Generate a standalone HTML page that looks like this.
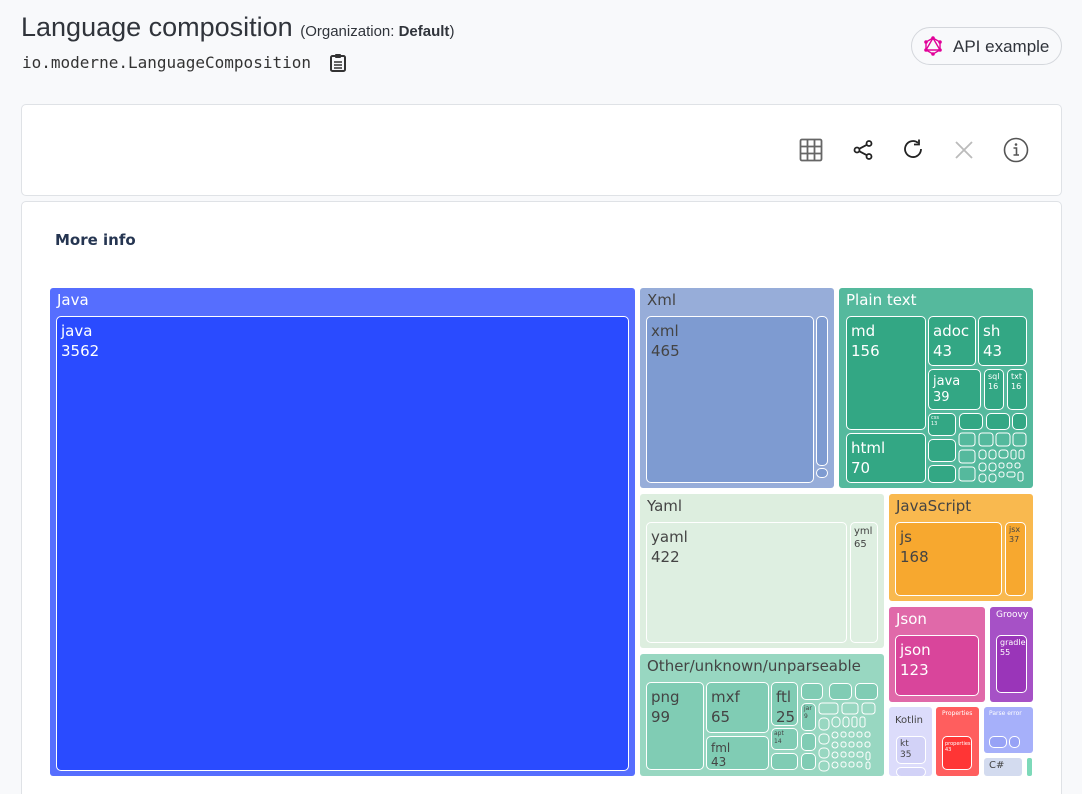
<!DOCTYPE html>
<html style="width:1082px;height:794px;overflow:hidden"><head><meta charset="utf-8"><style>
*{box-sizing:border-box;margin:0;padding:0}
body{width:1082px;height:794px;background:#f8f9fb;font-family:"Liberation Sans",sans-serif;position:relative;overflow:hidden;color:#2b2f36}
.a{position:absolute}
.p{position:absolute;border-radius:3px;font-family:"DejaVu Sans",sans-serif;font-size:15px;padding:3px 7px;line-height:18px;color:#fff}
.i{position:absolute;border:1.5px solid #fff;border-radius:5px;font-family:"DejaVu Sans",sans-serif;font-size:15px;padding:4px 4px;line-height:20px;color:#fff;overflow:hidden}
.d{color:#444}
.s{font-size:8px;line-height:10px;padding:2px 3px}
.t{font-size:5px;line-height:6px;padding:1px 2px}
</style></head><body>
<div class="a" style="left:21px;top:12px;font-size:27px;color:#30343b">Language composition <span style="font-size:15px">(Organization: <b>Default</b>)</span></div>
<div class="a" style="left:22px;top:53px;font-family:'DejaVu Sans Mono','Liberation Mono',monospace;font-size:16px;color:#333">io.moderne.LanguageComposition</div>
<svg class="a" style="left:328px;top:52px" width="20" height="21" viewBox="0 0 20 21"><rect x="3" y="4" width="14" height="15" rx="1.5" fill="none" stroke="#333" stroke-width="2"/><rect x="7" y="2" width="6" height="4" rx="1" fill="#333"/><path d="M6 10h8M6 13h8M6 16h8" stroke="#333" stroke-width="1.6"/></svg>
<div class="a" style="left:911px;top:27px;width:151px;height:38px;border:1px solid #d4d7dc;border-radius:19px;background:#f8f9fb"></div>
<svg class="a" style="left:922px;top:35px" width="22" height="22" viewBox="0 0 22 22"><g fill="none" stroke="#e10098" stroke-width="1.4"><path d="M11 3L4 7v8l7 4 7-4V7z"/><path d="M11 3L4 15h14z"/></g><g fill="#e10098"><circle cx="11" cy="3" r="1.8"/><circle cx="4" cy="7" r="1.8"/><circle cx="18" cy="7" r="1.8"/><circle cx="4" cy="15" r="1.8"/><circle cx="18" cy="15" r="1.8"/><circle cx="11" cy="19" r="1.8"/></g></svg>
<div class="a" style="left:953px;top:37px;font-size:17px;color:#30343b">API example</div>
<div class="a" style="left:21px;top:104px;width:1041px;height:92px;background:#fff;border:1px solid #dfe2e6;border-radius:5px"></div>
<svg class="a" style="left:799px;top:138px" width="24" height="24" viewBox="0 0 24 24"><rect x="1.5" y="1.5" width="21" height="21" rx="1.5" fill="none" stroke="#666" stroke-width="1.8"/><path d="M8.5 2v20M15.5 2v20M2 8.5h20M2 15.5h20" stroke="#666" stroke-width="1.8"/></svg>
<svg class="a" style="left:852px;top:138px" width="24" height="24" viewBox="0 0 24 24"><g fill="none" stroke="#222" stroke-width="1.8"><circle cx="17" cy="5.5" r="2.5"/><circle cx="5" cy="12" r="2.5"/><circle cx="17" cy="18.5" r="2.5"/><path d="M7.2 10.8l7.6-4M7.2 13.2l7.6 4"/></g></svg>
<svg class="a" style="left:902px;top:138px" width="24" height="24" viewBox="0 0 24 24"><path d="M19 11a8 8 0 1 1-3-6.2" fill="none" stroke="#222" stroke-width="1.8"/><path d="M17 1.5v5h-5" fill="none" stroke="#222" stroke-width="1.8"/></svg>
<svg class="a" style="left:953px;top:139px" width="22" height="22" viewBox="0 0 22 22"><path d="M3 3l16 16M19 3L3 19" stroke="#bbb" stroke-width="1.8"/></svg>
<svg class="a" style="left:1003px;top:137px" width="26" height="26" viewBox="0 0 26 26"><circle cx="13" cy="13" r="11.5" fill="none" stroke="#555" stroke-width="1.6"/><circle cx="13" cy="7.5" r="1.3" fill="#555"/><path d="M10.5 11h3v7M10.5 18h5.5" fill="none" stroke="#555" stroke-width="1.6"/></svg>
<div class="a" style="left:21px;top:201px;width:1041px;height:620px;background:#fff;border:1px solid #dfe2e6;border-radius:5px"></div>
<div class="a" style="left:55px;top:231px;font-family:'DejaVu Sans',sans-serif;font-size:15px;font-weight:bold;color:#253551">More info</div>

<div class="p" style="left:50px;top:288px;width:585px;height:488px;background:#566efe">Java</div>
<div class="i" style="left:56px;top:316px;width:573px;height:455px;background:#2a4bff">java<br>3562</div>

<div class="p d" style="left:640px;top:288px;width:194px;height:200px;background:#97add9">Xml</div>
<div class="i d" style="left:646px;top:316px;width:168px;height:167px;background:#7e9bd1">xml<br>465</div>
<div class="i" style="left:816px;top:316px;width:12px;height:150px;background:#7e9bd1;border-width:1px"></div>
<div class="i" style="left:816px;top:468px;width:12px;height:5px;background:#7e9bd1;border-width:1px"></div>

<div class="p" style="left:839px;top:288px;width:194px;height:200px;background:#55b99d">Plain text</div>
<div class="i" style="left:846px;top:316px;width:80px;height:114px;background:#33a784">md<br>156</div>
<div class="i" style="left:846px;top:433px;width:80px;height:50px;background:#33a784">html<br>70</div>
<div class="i" style="left:928px;top:316px;width:48px;height:50px;background:#33a784">adoc<br>43</div>
<div class="i" style="left:978px;top:316px;width:49px;height:50px;background:#33a784">sh<br>43</div>
<div class="i" style="left:928px;top:369px;width:53px;height:41px;background:#33a784;font-size:13px;line-height:16px">java<br>39</div>
<div class="i s" style="left:984px;top:369px;width:20px;height:41px;background:#33a784">sql<br>16</div>
<div class="i s" style="left:1007px;top:369px;width:20px;height:41px;background:#33a784">txt<br>16</div>
<div class="i t" style="left:928px;top:413px;width:28px;height:23px;background:#33a784">css<br>13</div>
<div class="i t" style="left:928px;top:439px;width:28px;height:23px;background:#33a784"></div>
<div class="i t" style="left:928px;top:465px;width:28px;height:18px;background:#33a784"></div>
<div class="i t" style="left:959px;top:413px;width:24px;height:17px;background:#33a784"></div>
<div class="i t" style="left:986px;top:413px;width:24px;height:17px;background:#33a784"></div>
<div class="i t" style="left:1012px;top:413px;width:15px;height:17px;background:#33a784"></div>
<svg class="a" style="left:958px;top:432px" width="70" height="52"><g fill="none" stroke="#fff" stroke-width="1"><rect x="1" y="1" width="16" height="13" rx="3"/><rect x="21" y="1" width="14" height="13" rx="3"/><rect x="38" y="1" width="14" height="13" rx="3"/><rect x="55" y="1" width="13" height="13" rx="3"/><rect x="1" y="18" width="16" height="13" rx="3"/><rect x="1" y="35" width="16" height="14" rx="3"/><rect x="21" y="18" width="7" height="9" rx="3"/><rect x="31" y="18" width="7" height="9" rx="3"/><rect x="41" y="18" width="9" height="8" rx="3"/><rect x="53" y="18" width="5" height="9" rx="2"/><rect x="61" y="18" width="5" height="9" rx="2"/><rect x="21" y="31" width="7" height="8" rx="3"/><rect x="31" y="31" width="7" height="8" rx="3"/><rect x="41" y="31" width="5" height="5" rx="2"/><rect x="49" y="31" width="5" height="5" rx="2"/><rect x="57" y="31" width="5" height="5" rx="2"/><rect x="21" y="42" width="7" height="8" rx="3"/><rect x="31" y="42" width="7" height="8" rx="3"/><rect x="41" y="40" width="5" height="5" rx="2"/><rect x="49" y="40" width="8" height="5" rx="2"/><rect x="60" y="40" width="5" height="9" rx="2"/></g></svg>

<div class="p d" style="left:640px;top:494px;width:244px;height:154px;background:#ddeedf">Yaml</div>
<div class="i d" style="left:646px;top:522px;width:201px;height:121px;background:#deefe1">yaml<br>422</div>
<div class="i d s" style="left:850px;top:522px;width:28px;height:121px;background:#deefe1;font-size:10px;line-height:13px">yml<br>65</div>

<div class="p d" style="left:889px;top:494px;width:144px;height:107px;background:#f9b94f">JavaScript</div>
<div class="i d" style="left:895px;top:522px;width:107px;height:74px;background:#f7a82f">js<br>168</div>
<div class="i d s" style="left:1005px;top:522px;width:21px;height:74px;background:#f7a82f">jsx<br>37</div>

<div class="p" style="left:889px;top:607px;width:96px;height:95px;background:#e069a9">Json</div>
<div class="i" style="left:895px;top:635px;width:84px;height:61px;background:#d9459b">json<br>123</div>
<div class="p" style="left:990px;top:607px;width:43px;height:95px;background:#a651c6;font-size:9px;line-height:12px;padding:2px 6px">Groovy</div>
<div class="i s" style="left:996px;top:635px;width:31px;height:58px;background:#9a35b9">gradle<br>55</div>

<div class="p d" style="left:640px;top:654px;width:244px;height:122px;background:#98d7c1">Other/unknown/unparseable</div>
<div class="i d" style="left:646px;top:682px;width:58px;height:88px;background:#80ccb4">png<br>99</div>
<div class="i d" style="left:706px;top:682px;width:63px;height:51px;background:#80ccb4">mxf<br>65</div>
<div class="i d" style="left:706px;top:736px;width:63px;height:34px;background:#80ccb4;font-size:12px;line-height:14px">fml<br>43</div>
<div class="i d" style="left:771px;top:682px;width:27px;height:44px;background:#80ccb4">ftl<br>25</div>
<div class="i d t" style="left:771px;top:728px;width:27px;height:22px;background:#80ccb4;font-size:6px;line-height:8px">apt<br>14</div>
<div class="i d t" style="left:771px;top:753px;width:27px;height:17px;background:#80ccb4"></div>
<div class="i d t" style="left:801px;top:683px;width:22px;height:17px;background:#80ccb4"></div>
<div class="i d t" style="left:829px;top:683px;width:23px;height:17px;background:#80ccb4"></div>
<div class="i d t" style="left:855px;top:683px;width:23px;height:17px;background:#80ccb4"></div>
<div class="i d t" style="left:801px;top:703px;width:15px;height:28px;background:#80ccb4;font-size:6px;line-height:8px">jar<br>9</div>
<div class="i d t" style="left:801px;top:733px;width:15px;height:18px;background:#80ccb4"></div>
<div class="i d t" style="left:801px;top:753px;width:15px;height:17px;background:#80ccb4"></div>
<svg class="a" style="left:818px;top:702px" width="64" height="70"><g fill="none" stroke="#fff" stroke-width="1"><rect x="1" y="1" width="19" height="11" rx="3"/><rect x="24" y="1" width="16" height="11" rx="3"/><rect x="44" y="1" width="13" height="11" rx="3"/><rect x="1" y="16" width="10" height="12" rx="4"/><rect x="14" y="15" width="8" height="10" rx="4"/><rect x="25" y="15" width="6" height="10" rx="3"/><rect x="34" y="15" width="5" height="10" rx="2"/><rect x="42" y="15" width="5" height="10" rx="2"/><rect x="1" y="32" width="10" height="10" rx="4"/><rect x="1" y="46" width="10" height="10" rx="4"/><rect x="1" y="59" width="10" height="10" rx="4"/><rect x="14" y="30" width="6" height="6" rx="3"/><rect x="23" y="30" width="5" height="5" rx="2"/><rect x="31" y="30" width="5" height="5" rx="2"/><rect x="39" y="30" width="5" height="5" rx="2"/><rect x="47" y="30" width="5" height="5" rx="2"/><rect x="14" y="40" width="6" height="6" rx="3"/><rect x="23" y="40" width="5" height="5" rx="2"/><rect x="31" y="40" width="5" height="5" rx="2"/><rect x="39" y="40" width="5" height="5" rx="2"/><rect x="47" y="40" width="5" height="5" rx="2"/><rect x="14" y="50" width="6" height="6" rx="3"/><rect x="23" y="50" width="5" height="5" rx="2"/><rect x="31" y="50" width="5" height="5" rx="2"/><rect x="39" y="50" width="6" height="5" rx="2"/><rect x="48" y="50" width="4" height="8" rx="2"/><rect x="14" y="60" width="6" height="6" rx="3"/><rect x="23" y="60" width="5" height="5" rx="2"/><rect x="31" y="60" width="5" height="5" rx="2"/><rect x="39" y="60" width="5" height="5" rx="2"/><rect x="48" y="60" width="4" height="7" rx="2"/></g></svg>

<div class="p d" style="left:889px;top:707px;width:43px;height:69px;background:#dcdcfb;font-size:10px;padding:3px 6px;line-height:22px">Kotlin</div>
<div class="i d s" style="left:896px;top:736px;width:30px;height:28px;background:#d2d2f7;font-size:9px;line-height:11px">kt<br>35</div>
<div class="i" style="left:896px;top:767px;width:30px;height:4px;background:#d2d2f7;border-width:1px"></div>
<div class="p" style="left:936px;top:707px;width:43px;height:69px;background:#ff5e5e;font-size:6px;line-height:12px;padding:1px 6px">Properties</div>
<div class="i t" style="left:942px;top:736px;width:30px;height:34px;background:#ff3535;padding:4px 2px">properties<br>43</div>
<div class="p" style="left:984px;top:707px;width:49px;height:46px;background:#a6b0fa;font-size:6px;line-height:12px;padding:1px 5px">Parse error</div>
<div class="i" style="left:989px;top:736px;width:18px;height:12px;background:#97a2f6;border-width:1px"></div>
<div class="i" style="left:1009px;top:736px;width:11px;height:12px;background:#97a2f6;border-width:1px"></div>
<div class="p d" style="left:984px;top:758px;width:38px;height:18px;background:#d3dbef;font-size:10px;line-height:12px;padding:2px 5px">C#</div>
<div class="a" style="left:1027px;top:758px;width:5px;height:18px;background:#7dd9b9;border-radius:2px"></div>
</body></html>
